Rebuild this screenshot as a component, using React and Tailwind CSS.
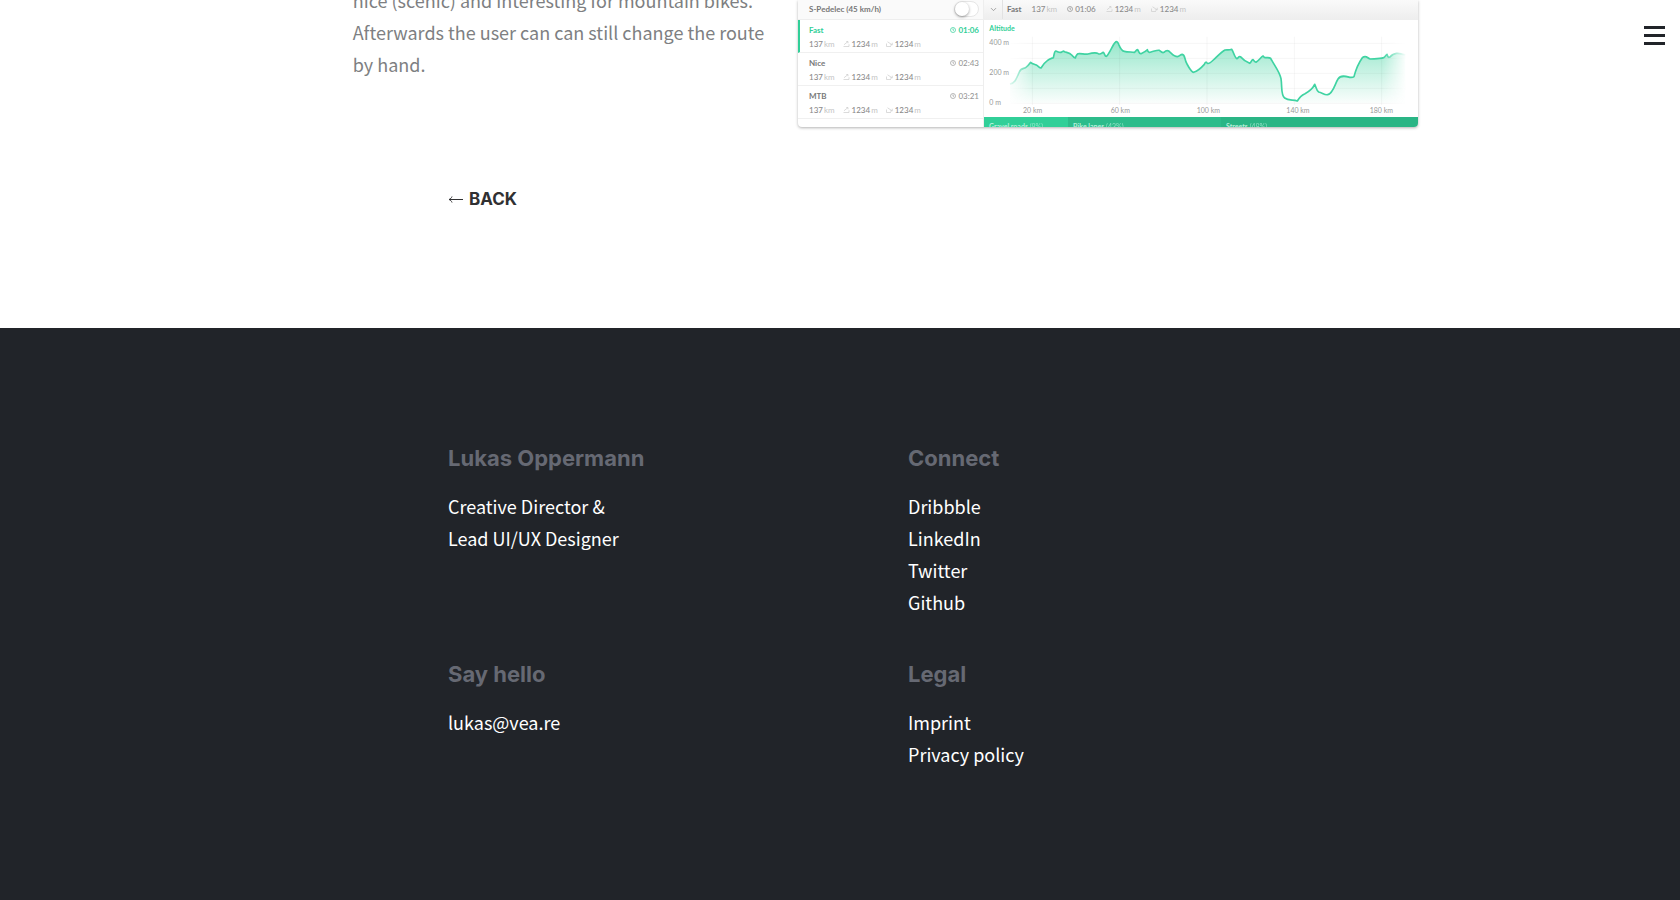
import { ChevronDown } from "lucide-react";

const routes = [
  { name: "Fast", time: "01:06", active: true },
  { name: "Nice", time: "02:43", active: false },
  { name: "MTB", time: "03:21", active: false },
];

const line =
  "M105 252 C120 250 124 236 133 216 C139 202 146 207 152 203 C158 199 162 194 167 187 C172 192 177 192 184 195 C190 198 193 204 198 204 C203 196 208 188 217 182 C224 175 230 175 235 173 C238 162 238 154 242 153 C249 155 254 160 260 156 C264 155 265 151 268 155 C275 158 284 158 290 165 C294 170 298 173 301 174 C304 165 306 161 311 161 C320 160 329 164 339 162 C350 159 362 156 370 161 C378 165 380 158 385 157 C389 160 389 169 394 169 C402 163 412 137 420 128 C424 123 428 124 431 133 C436 145 440 153 448 154 C460 157 470 155 479 157 C483 152 485 149 488 149 C492 155 492 162 498 161 C505 158 512 155 517 149 C519 155 521 159 528 156 C538 154 547 149 553 151 C558 155 561 160 567 157 C572 152 575 150 581 153 C590 160 596 170 607 170 C614 169 616 163 622 163 C631 164 628 180 636 192 C644 207 650 217 656 217 C668 213 680 202 688 193 C691 185 694 185 697 190 C702 192 708 187 715 180 C728 168 739 156 750 150 C757 149 763 151 770 148 C777 158 779 174 786 176 C790 175 791 167 796 170 C804 179 814 186 824 190 C829 188 830 178 834 179 C838 183 840 188 844 186 C852 181 858 171 864 168 C868 171 867 174 873 173 C880 173 884 172 887 175 C897 195 914 215 918 236 C922 262 917 285 929 294 C941 303 955 298 967 303 C973 292 981 285 990 281 C1003 274 1013 266 1019 253 C1023 259 1024 272 1031 276 C1041 277 1048 286 1058 284 C1075 281 1079 253 1089 237 C1098 224 1113 229 1124 232 C1129 232 1133 233 1137 230 C1142 210 1152 187 1162 173 C1174 163 1178 176 1186 177 C1198 176 1213 177 1226 173 C1231 171 1233 165 1236 163 C1238 170 1240 174 1245 171 C1257 157 1271 158 1291 165";

function ClockIcon() {
  return (
    <svg viewBox="0 0 12 12" className="size-[6px] shrink-0" fill="none" stroke="currentColor" strokeWidth="1.4" aria-hidden="true">
      <circle cx="6" cy="6" r="5" />
      <path d="M6 3V6.4H8" />
    </svg>
  );
}

function Climb() {
  return (
    <svg viewBox="0 0 14 12" className="h-[6px] w-[7px] shrink-0 text-[#cfcfcf]" fill="none" stroke="currentColor" strokeWidth="1.5" aria-hidden="true">
      <path d="M10 1L2 7.5M6.5 1H10V4.5M1 11H12V6.5" />
    </svg>
  );
}

function Descent() {
  return (
    <svg viewBox="0 0 14 12" className="h-[6px] w-[7px] shrink-0 text-[#cfcfcf]" fill="none" stroke="currentColor" strokeWidth="1.5" aria-hidden="true">
      <path d="M3 1.5L12 7.5M12.5 3.5V8H8M1 5V11H10" />
    </svg>
  );
}

function Value({ children, unit }) {
  return (
    <span className="flex gap-px">
      <span className="font-medium">{children}</span>
      <span className="text-[#c4c4c4]">{unit}</span>
    </span>
  );
}

function RoutePlanner() {
  return (
    <div className="flex h-[127px] overflow-hidden rounded-b bg-white font-['Lato',sans-serif] text-[8px] leading-[10px] text-[#8b8b8b] shadow-[0_1px_3px_rgba(0,0,0,0.3)]">
      <div className="flex w-[30%] flex-col border-r border-[#eeeeee]">
        <label className="flex h-5 shrink-0 items-center justify-between border-b border-[#eeeeee] bg-[#fafafa] pr-1 pb-px pl-[11px] font-bold text-[#777]">
          S-Pedelec (45 km/h)
          <input type="checkbox" className="sr-only" />
          <span className="flex h-4 w-[25px] items-center rounded-full border border-[#e6e6e6] bg-white">
            <span className="size-[14px] rounded-full bg-white shadow-[0_1px_3px_rgba(0,0,0,0.4)]" />
          </span>
        </label>
        <ul>
          {routes.map((r) => (
            <li
              key={r.name}
              className={
                r.active
                  ? "flex h-[33px] flex-col justify-end gap-1 border-b border-l-2 border-b-[#f0f0f0] border-l-[#31cf98] pr-1 pb-[3px] pl-[9px]"
                  : "flex h-[33px] flex-col justify-end gap-1 border-b border-b-[#f0f0f0] pr-1 pb-[3px] pl-[11px]"
              }
            >
              <div className={r.active ? "flex justify-between font-bold text-[#31cf98]" : "flex justify-between text-[#777]"}>
                <span className="font-bold">{r.name}</span>
                <span className={r.active ? "flex items-center gap-[2px]" : "flex items-center gap-[2px] font-medium text-[#999]"}>
                  <ClockIcon />
                  {r.time}
                </span>
              </div>
              <div className="flex gap-2">
                <Value unit="km">137</Value>
                <span className="flex items-center gap-[2px]">
                  <Climb />
                  <Value unit="m">1234</Value>
                </span>
                <span className="flex items-center gap-[2px]">
                  <Descent />
                  <Value unit="m">1234</Value>
                </span>
              </div>
            </li>
          ))}
        </ul>
      </div>
      <div className="flex min-w-0 flex-1 flex-col">
        <div className="flex h-5 shrink-0 items-center gap-[10px] border-b border-[#eeeeee] bg-linear-to-b from-[#fafafa] to-[#eeeeee] pb-px pl-[5px]">
          <span className="flex items-center gap-1">
            <ChevronDown className="size-[9px]" aria-hidden="true" />
            <span className="border-l border-[#e2e2e2] pl-1 leading-[19px] font-bold text-[#777]">Fast</span>
          </span>
          <Value unit="km">137</Value>
          <span className="flex items-center gap-[2px] font-medium">
            <ClockIcon />
            01:06
          </span>
          <span className="flex items-center gap-[2px]">
            <Climb />
            <Value unit="m">1234</Value>
          </span>
          <span className="flex items-center gap-[2px]">
            <Descent />
            <Value unit="m">1234</Value>
          </span>
        </div>
        <svg viewBox="27 60 1302 291" className="h-[97px] w-full shrink-0" role="img" aria-label="Altitude profile">
          <defs>
            <linearGradient id="area" x1="0" y1="120" x2="0" y2="310" gradientUnits="userSpaceOnUse">
              <stop offset="0" stopColor="#31cf98" stopOpacity="0.52" />
              <stop offset="1" stopColor="#31cf98" stopOpacity="0.02" />
            </linearGradient>
            <linearGradient id="edges" x1="100" x2="1295" y1="0" y2="0" gradientUnits="userSpaceOnUse">
              <stop offset="0" stopColor="#fff" stopOpacity="0.1" />
              <stop offset="0.06" stopColor="#fff" />
              <stop offset="0.94" stopColor="#fff" />
              <stop offset="1" stopColor="#fff" stopOpacity="0" />
            </linearGradient>
            <mask id="fade" maskUnits="userSpaceOnUse" x="27" y="60" width="1302" height="291">
              <rect x="27" y="60" width="1302" height="291" fill="url(#edges)" />
            </mask>
          </defs>
          <g mask="url(#fade)">
            <path d={line + " V310 H105 Z"} fill="url(#area)" />
            <path
              d="M105 130H1305M105 175H1305M105 220H1305M105 265H1305M105 310H1305M172 110V315M434 110V315M696 110V315M958 110V315M1220 110V315"
              stroke="#000"
              strokeOpacity="0.04"
              strokeWidth="3"
            />
            <path d={line} fill="none" stroke="#3fd3a2" strokeWidth="5" strokeLinejoin="round" />
          </g>
          <g fontSize="21" fill="#999">
            <text x="43" y="93" fill="#31cf98" fontWeight="700">Altitude</text>
            <text x="43" y="135">400 m</text>
            <text x="43" y="226">200 m</text>
            <text x="43" y="316">0 m</text>
            <g textAnchor="middle">
              <text x="173" y="338">20 km</text>
              <text x="436" y="338">60 km</text>
              <text x="700" y="338">100 km</text>
              <text x="969" y="338">140 km</text>
              <text x="1219" y="338">180 km</text>
            </g>
          </g>
        </svg>
        <div className="flex h-[10px] shrink-0 overflow-hidden text-[7px] leading-[18px] font-bold text-[#b5f0db]">
          <span className="w-[84px] bg-[#31cf98] pl-[5px]">
            Gravel roads <span className="font-normal opacity-70">(9%)</span>
          </span>
          <span className="w-[153px] bg-[#2dbc8b] pl-[5px]">
            Bike lanes <span className="font-normal opacity-70">(43%)</span>
          </span>
          <span className="flex-1 bg-[#2ab585] pl-[5px]">
            Streets <span className="font-normal opacity-70">(48%)</span>
          </span>
        </div>
      </div>
    </div>
  );
}

function FooterGroup({ title, children }) {
  return (
    <section className="flex flex-col gap-4">
      <h2 className="font-['Inter',sans-serif] text-[22px] leading-8 font-bold text-[#666973]">{title}</h2>
      <div className="flex flex-col items-start text-lg leading-8 text-white">{children}</div>
    </section>
  );
}

export default function App() {
  return (
    <div className="flex min-h-screen flex-col overflow-hidden bg-white font-['Noto_Sans_CJK_SC',sans-serif]">
      <button type="button" aria-label="Menu" className="fixed top-[26px] right-[15px] z-10 flex w-[21px] flex-col gap-[5px]">
        <span className="h-[3px] bg-[#212429]" />
        <span className="h-[3px] bg-[#212429]" />
        <span className="h-[3px] bg-[#212429]" />
      </button>
      <main>
        <div className="flex justify-between pr-[262px] pl-[21%]">
          <p className="-mt-4 w-[420px] text-lg leading-8 text-[#7e7f82]">
            nice (scenic) and interesting for mountain bikes. Afterwards the user can can still change the route by hand.
          </p>
          <div className="w-[620px]">
            <RoutePlanner />
          </div>
        </div>
        <div className="mx-auto max-w-[784px] pt-14 pb-[113px]">
          <a href="#projects" className="inline-flex items-center gap-[6px] font-['Inter',sans-serif] text-[17px] leading-8 font-bold text-[#303032]">
            <svg viewBox="0 0 15 8" className="mt-[2px] h-2 w-[15px]" fill="none" stroke="currentColor" aria-hidden="true">
              <path d="M15 3.5H1M4 0.5C3.5 2 2.5 3 1 3.5C2.5 4 3.5 5 4 6.5" />
            </svg>
            BACK
          </a>
        </div>
      </main>
      <footer className="flex-1 bg-[#212429] pt-[114px] pb-[129px]">
        <div className="mx-auto grid max-w-[784px] grid-cols-2 gap-x-[136px] gap-y-10">
          <FooterGroup title="Lukas Oppermann">
            <p>
              Creative Director &amp;
              <br />
              Lead UI/UX Designer
            </p>
          </FooterGroup>
          <FooterGroup title="Connect">
            <a href="#dribbble">Dribbble</a>
            <a href="#linkedin">LinkedIn</a>
            <a href="#twitter">Twitter</a>
            <a href="#github">Github</a>
          </FooterGroup>
          <FooterGroup title="Say hello">
            <a href="mailto:lukas@vea.re">lukas@vea.re</a>
          </FooterGroup>
          <FooterGroup title="Legal">
            <a href="#imprint">Imprint</a>
            <a href="#privacy">Privacy policy</a>
          </FooterGroup>
        </div>
      </footer>
    </div>
  );
}
